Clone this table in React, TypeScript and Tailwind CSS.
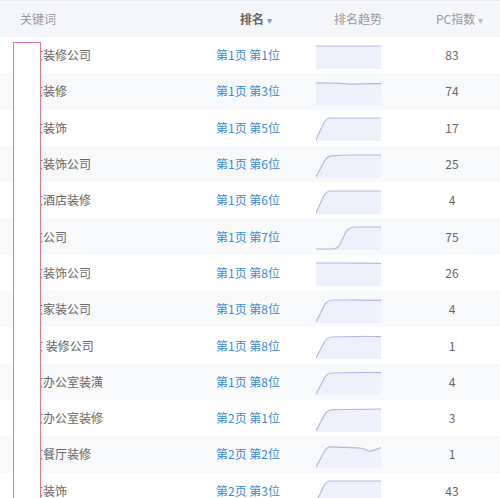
import React from "react";

type Row = {
  keyword: string;
  rank: string;
  trend: [number, number][];
  pc: number;
};

// trend points: [x 0..65, value 0 = bottom .. 1 = top]
const rise: [number, number][] = [[0, 0], [10, 1], [30, 1], [50, 1], [65, 1]];
const riseSoft: [number, number][] = [[0, 0], [11, 0.95], [30, 0.97], [50, 0.98], [65, 0.97]];

const rows: Row[] = [
  { keyword: "北京装修公司", rank: "第1页 第1位", trend: [[0, 1], [65, 1]], pc: 83 },
  { keyword: "北京装修", rank: "第1页 第3位", trend: [[0, 0.96], [20, 0.95], [35, 0.9], [50, 0.92], [65, 0.93]], pc: 74 },
  { keyword: "北京装饰", rank: "第1页 第5位", trend: rise, pc: 17 },
  { keyword: "北京装饰公司", rank: "第1页 第6位", trend: [[0, 0], [11, 0.95], [30, 1], [65, 1]], pc: 25 },
  { keyword: "北京酒店装修", rank: "第1页 第6位", trend: rise, pc: 4 },
  { keyword: "北京公司", rank: "第1页 第7位", trend: [[0, 0], [22, 0], [32, 1], [65, 1]], pc: 75 },
  { keyword: "北京装饰公司", rank: "第1页 第8位", trend: [[0, 1], [40, 1], [65, 0.98]], pc: 26 },
  { keyword: "北京家装公司", rank: "第1页 第8位", trend: [[0, 0], [11, 1], [40, 1], [65, 0.98]], pc: 4 },
  { keyword: "北京 装修公司", rank: "第1页 第8位", trend: riseSoft, pc: 1 },
  { keyword: "北京办公室装潢", rank: "第1页 第8位", trend: riseSoft, pc: 4 },
  { keyword: "北京办公室装修", rank: "第2页 第1位", trend: [[0, 0], [11, 0.97], [40, 0.98], [65, 1]], pc: 3 },
  { keyword: "北京餐厅装修", rank: "第2页 第2位", trend: [[0, 0], [11, 0.92], [25, 0.9], [46, 0.86], [54, 0.7], [65, 0.88]], pc: 1 },
  { keyword: "北京装饰", rank: "第2页 第3位", trend: rise, pc: 43 },
];

function Sparkline({ data }: { data: [number, number][] }) {
  const w = 65;
  const h = 24;
  const pts = data.map(([x, v]) => [x, 1 + (1 - v) * (h - 2)]);
  // 圆角折线
  let line = `M${pts[0][0]},${pts[0][1]}`;
  for (let i = 1; i < pts.length - 1; i++) {
    const [x, y] = pts[i];
    const [px, py] = pts[i - 1];
    const [nx, ny] = pts[i + 1];
    const a = [x + (px - x) * 0.25, y + (py - y) * 0.25];
    const b = [x + (nx - x) * 0.25, y + (ny - y) * 0.25];
    line += ` L${a[0]},${a[1]} Q${x},${y} ${b[0]},${b[1]}`;
  }
  const last = pts[pts.length - 1];
  line += ` L${last[0]},${last[1]}`;
  const area = `${line} L${w},${h} L0,${h} Z`;
  return (
    <svg width={w} height={h} viewBox={`0 0 ${w} ${h}`} className="block">
      <path d={area} fill="#eef0fb" />
      <path d={line} fill="none" stroke="#b4b8e6" strokeWidth="1.2" />
    </svg>
  );
}

export default function App() {
  return (
    <div
      className="relative w-[500px] h-[498px] overflow-hidden bg-white text-[12px]"
      style={{ fontFamily: '"Noto Sans CJK SC", "Noto Sans", sans-serif' }}
    >
      {/* 表头 */}
      <div className="flex items-center h-[37px] bg-[#f5f6f9] border-t border-[#e8eaee] text-[#999]">
        <div className="w-[206px] pl-[20px]">关键词</div>
        <div className="w-[100px] pl-[34px] text-[#666] font-semibold">
          排名 <span className="text-[10px] text-[#7a9ccc] font-normal">▾</span>
        </div>
        <div className="w-[100px] pl-[28px]">排名趋势</div>
        <div className="flex-1 pl-[30px]">
          PC指数 <span className="text-[10px] text-[#bbb]">▾</span>
        </div>
      </div>

      {rows.map((r, i) => (
        <div
          key={i}
          className={`flex items-center h-[36.3px] ${i % 2 === 1 ? "bg-[#f8f9fb]" : "bg-white"}`}
        >
          <div className="w-[216px] pl-[19px] text-[#666] whitespace-pre">{r.keyword}</div>
          <div className="w-[100px] text-[#3a8ad8]">{r.rank}</div>
          <div className="w-[100px] pt-[3px]">
            <Sparkline data={r.trend} />
          </div>
          <div className="flex-1 pl-[20px] pr-[32px] text-center text-[#666]">{r.pc}</div>
        </div>
      ))}

      {/* 遮挡框 */}
      <div className="absolute left-[13px] top-[42px] w-[28px] h-[480px] bg-white border border-[#e07a86]" />
    </div>
  );
}
